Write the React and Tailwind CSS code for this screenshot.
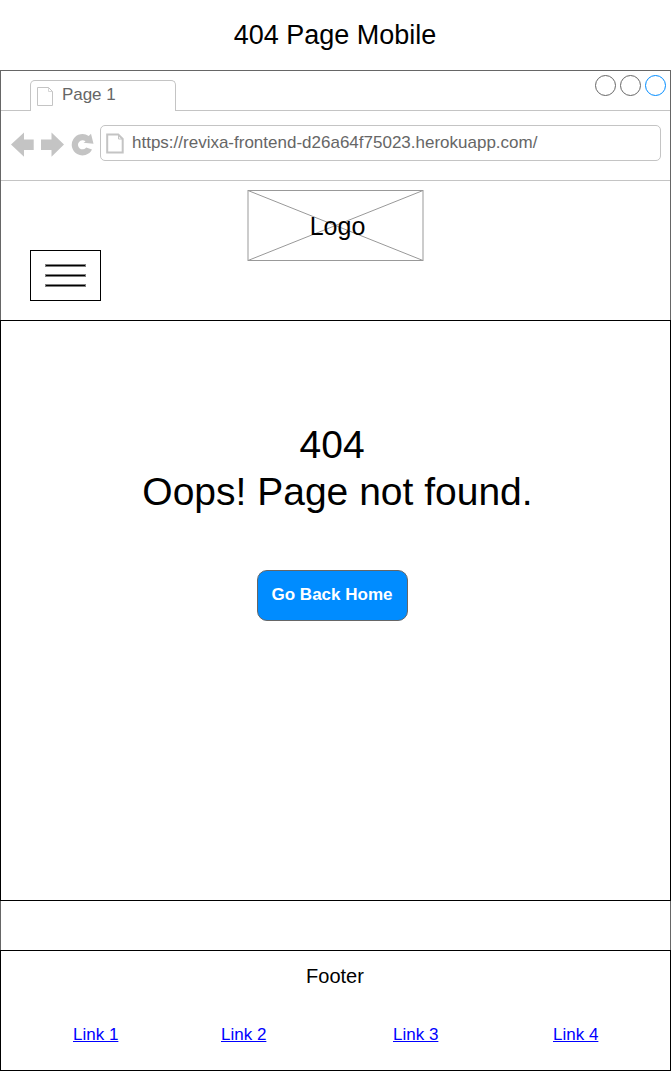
import React from "react";

function TabBar() {
  return (
    <div className="flex h-10 items-end">
      <div className="h-full w-[29px] border-b border-[#c4c4c4]" />
      <div className="flex h-[31px] w-[146px] rounded-t-[5px] border border-b-0 border-[#c4c4c4] pl-[6px] pt-[5px]">
        <svg width="17" height="20" viewBox="0 0 17 20" fill="none" stroke="#c4c4c4">
          <path d="M.5 1.5H11.5L15.5 5.5V19.5H.5Z" />
          <path strokeOpacity=".7" d="M11.5 1.5V5.5H15.5" />
        </svg>
        <span className="ml-[8px] mt-[-1px] text-[17px] leading-[20px] tracking-[-0.05px] text-[#666666]">Page 1</span>
      </div>
      <div className="flex h-full flex-1 justify-end gap-1 border-b border-[#c4c4c4] pr-1 pt-1">
        <span className="size-[21px] rounded-full border border-[#666666]" />
        <span className="size-[21px] rounded-full border border-[#666666]" />
        <span className="size-[21px] rounded-full border border-[#008cff]" />
      </div>
    </div>
  );
}

function AddressBar() {
  return (
    <div className="flex h-[70px] border-b border-[#c4c4c4] pt-[14px]">
      <svg className="mt-[6px] ml-[10px] shrink-0" width="86" height="28" viewBox="11 131 86 28">
        <g fill="#c4c4c4">
          <path d="M11 144.5L24 132.5V139.5H33.7V150H24V156.7Z" />
          <path d="M64 144.5L51.5 132.5V139.5H41V150H51.5V156.7Z" />
          <path d="M91 133.8L93.5 143.8L83.5 142.7L85.6 141.6A4.5 4.5 0 1 0 86.2 147.4L92 149.6A10.7 10.7 0 1 1 88.7 136.1Z" />
        </g>
      </svg>
      <div className="ml-[3px] flex h-9 w-[561px] rounded-[5px] border border-[#c4c4c4] pl-[5px] pt-[7px]">
        <svg width="20" height="22" viewBox="0 0 20 22" fill="none" stroke="#c4c4c4">
          <path strokeWidth="2" d="M1.2 1.5H12.2L16.7 6V19.6H1.2Z" />
          <path d="M12.5 1.5V6H17" />
        </svg>
        <span className="ml-[6px] text-[17px] leading-[20px] text-[#666666]">
          https://revixa-frontend-d26a64f75023.herokuapp.com/
        </span>
      </div>
    </div>
  );
}

function SiteHeader() {
  return (
    <div className="flex h-[139px] flex-col pt-[9px]">
      <div className="grid h-[71px] w-[177px] self-center place-items-center">
        <svg className="col-start-1 row-start-1" width="177" height="71" fill="none">
          <path d="M1 .5L176 70.5M1 70.5L176 .5" stroke="#999999" />
          <path d="M1 0V71M176 0V71" stroke="#999999" />
          <path d="M1 .5H176M1 70.5H176" stroke="#999999" />
        </svg>
        <span className="z-10 col-start-1 row-start-1 ml-[4px] text-[25px] leading-[30px]">Logo</span>
      </div>
      <button className="-mt-[11px] ml-[29px] flex h-[51px] w-[71px] items-center justify-center border border-black">
        <svg width="41" height="23" viewBox="0 0 41 23">
          <path d="M0 1.5H41M0 11.5H41M0 21.5H41" stroke="#808080" strokeWidth="3" />
          <path d="M1 1.5H40M1 11.5H40M1 21.5H40" stroke="#000000" />
        </svg>
      </button>
    </div>
  );
}

function FooterLink({ className, children }) {
  return (
    <a href="#" className={`text-[17px] leading-[20px] text-[#0000ff] underline ${className}`}>
      {children}
    </a>
  );
}

export default function App() {
  return (
    <div className="flex h-[1071px] w-[671px] flex-col overflow-hidden bg-white font-['Liberation_Sans',Arial,sans-serif] text-black">
      <h1 className="h-[70px] pr-[1px] pt-[19px] text-center text-[27px] leading-[32px]">404 Page Mobile</h1>
      <div className="flex h-[1001px] flex-col border border-b-0 border-[#666666]">
        <TabBar />
        <AddressBar />
        <SiteHeader />
        <main className="-mx-px flex h-[581px] flex-col items-center border border-black pt-[100px]">
          <p className="ml-[4px] text-center text-[39px] leading-[47px]">
            404&nbsp;
            <br />
            Oops! Page not found.
          </p>
          <button className="mt-[55px] mr-[6px] h-[51px] w-[151px] rounded-[10px] border border-[#666666] bg-[#008cff] pr-[1px] pb-[1px] text-[17px] font-bold leading-[20px] text-white">
            Go Back Home
          </button>
        </main>
        <footer className="-mx-px mt-[49px] flex h-[121px] flex-col border border-black pt-[13px]">
          <div className="pr-[1px] text-center text-[20px] leading-[24px]">Footer</div>
          <nav className="mt-[37px] flex pl-[72px]">
            <FooterLink className="w-[148px]">Link 1</FooterLink>
            <FooterLink className="w-[172px]">Link 2</FooterLink>
            <FooterLink className="w-[160px]">Link 3</FooterLink>
            <FooterLink className="w-[60px]">Link 4</FooterLink>
          </nav>
        </footer>
      </div>
    </div>
  );
}
